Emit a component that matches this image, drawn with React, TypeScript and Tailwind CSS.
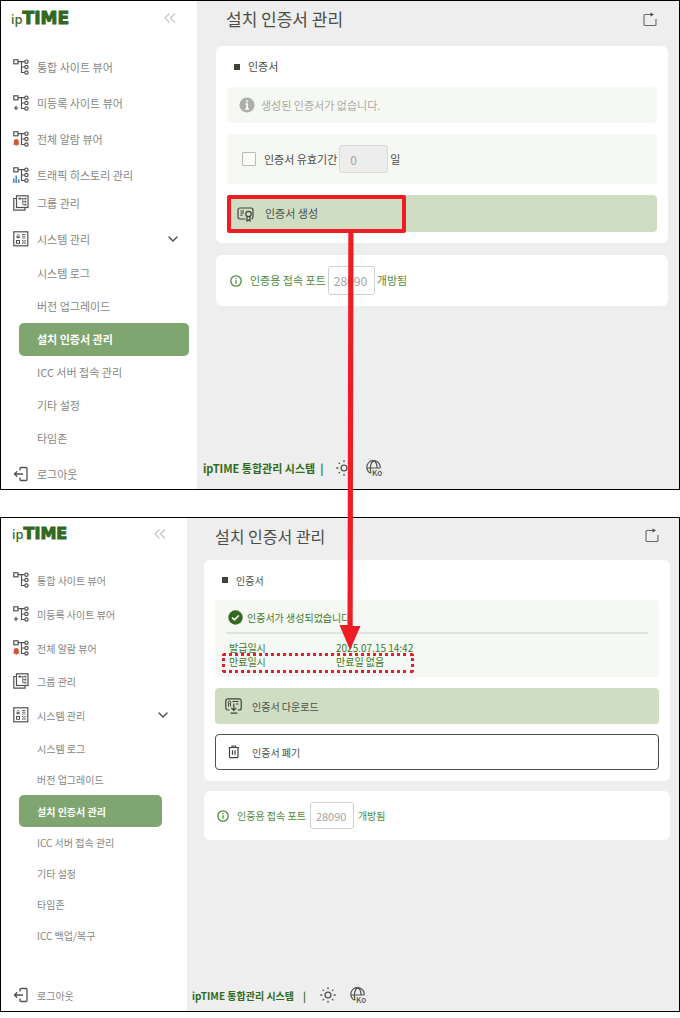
import type { ReactNode } from "react"
import { ChevronDown } from "lucide-react"
import clsx from "clsx"

interface MenuItem {
  label: string
  icon: ReactNode
}

interface ScreenProps {
  compact?: boolean
  items: MenuItem[]
  subItems: string[]
  children: ReactNode
}

const ACTIVE_ITEM = "설치 인증서 관리"

const firstItems: MenuItem[] = [
  { label: "통합 사이트 뷰어", icon: <TreeIcon /> },
  { label: "미등록 사이트 뷰어", icon: <TreeIcon badge="plus" /> },
  { label: "전체 알람 뷰어", icon: <TreeIcon badge="bell" /> },
  { label: "트래픽 히스토리 관리", icon: <TreeIcon badge="bars" /> },
]

const secondItems = firstItems.slice(0, 3)

const subItems = ["시스템 로그", "버전 업그레이드", ACTIVE_ITEM, "ICC 서버 접속 관리", "기타 설정", "타임존"]

export default function App() {
  return (
    <div className="relative bg-white font-['Noto_Sans_CJK_KR',sans-serif] text-[#4a4d48]">
      <Screen items={firstItems} subItems={subItems}>
        <section className="rounded-md bg-white px-[11px] pb-[11px]">
          <CardTitle />
          <div className="flex h-9 items-center gap-[6px] rounded bg-[#f6f8f3] pl-3 text-[#a8aaa6]">
            <InfoFilledIcon />
            <span>생성된 인증서가 없습니다.</span>
          </div>
          <div className="mt-[11px] flex h-[50px] items-center rounded bg-[#f6f8f3] pl-[15px]">
            <input
              id="use-period"
              type="checkbox"
              className="size-[14px] appearance-none rounded-[1px] border border-[#b9bbb7] bg-[#fbfcfa]"
            />
            <label htmlFor="use-period" className="ml-2">
              인증서 유효기간
            </label>
            <input
              type="text"
              aria-label="유효기간 (일)"
              defaultValue="0"
              disabled
              className="mx-[2px] h-7 w-[49px] rounded-[3px] border border-[#d9dbd8] bg-[#ededed] pl-[10px] text-xs text-[#a3a5a2]"
            />
            <span>일</span>
          </div>
          <button
            type="button"
            className="relative mt-[11px] flex h-[37px] w-full items-center gap-[11px] rounded bg-[#cfdec3] pl-[10px]"
          >
            <CertificateIcon />
            <span>인증서 생성</span>
            <span className="absolute top-0 left-0 h-[38px] w-[179px] rounded-[2px] border-4 border-[#ee1c25]" />
          </button>
        </section>
        <PortCard id="port-before" />
      </Screen>

      <div className="h-[27px]" />

      <Screen compact items={secondItems} subItems={[...subItems, "ICC 백업/복구"]}>
        <section className="rounded-md bg-white px-[11px] pb-[11px]">
          <CardTitle compact />
          <div className="relative h-[77px] rounded bg-[#f6f8f3] px-[11px] text-[#3c7a28]">
            <div className="flex h-[34px] items-center gap-1 border-b-2 border-[#e0e3dc] pt-[2px] pl-[2px]">
              <CheckFilledIcon />
              <span>인증서가 생성되었습니다.</span>
            </div>
            <dl className="grid grid-cols-[107px_1fr] pt-[7px] pl-[3px] leading-[14px]">
              <dt>발급일시</dt>
              <dd>2025.07.15 14:42</dd>
              <dt>만료일시</dt>
              <dd>만료일 없음</dd>
            </dl>
            <span className="absolute top-[53px] left-[7px] h-[20px] w-[192px] rounded-[3px] border-3 border-dotted border-[#e0202c]" />
          </div>
          <button
            type="button"
            className="mt-[11px] flex h-9 w-full items-center gap-[10px] rounded bg-[#cfdec3] pl-[10px]"
          >
            <DownloadIcon />
            <span>인증서 다운로드</span>
          </button>
          <button
            type="button"
            className="mt-[10px] flex h-9 w-full items-center gap-[10px] rounded border border-[#4a4d48] bg-white pl-[10px]"
          >
            <TrashIcon />
            <span>인증서 폐기</span>
          </button>
        </section>
        <PortCard id="port-after" compact />
      </Screen>

      <svg
        className="pointer-events-none absolute top-[232px] left-[339px]"
        width="22"
        height="418"
        viewBox="0 0 22 418"
        fill="#ee1c25"
      >
        <path d="M9.3 0h5.2L13.7 394h7.8L11 418 .5 393h8z" />
      </svg>
    </div>
  )
}

function Screen({ compact, items, subItems, children }: ScreenProps) {
  return (
    <div className={clsx("flex border border-black bg-[#eeeeee]", compact ? "text-[10px]" : "text-[11px]")}>
      <aside className={clsx("shrink-0 bg-white text-[#858784]", compact ? "w-[186px] pb-[2px]" : "w-[196px] pb-px")}>
        <div
          className={clsx(
            "flex items-center justify-between pr-[21px]",
            compact ? "mb-[13px] h-8 pl-[11px]" : "mb-[14px] h-[34px] pl-[10px]",
          )}
        >
          <Logo compact={compact} />
          <button type="button" aria-label="메뉴 접기">
            <svg width="12" height="10" viewBox="0 0 12 10" fill="none" stroke="#c6c8c5" strokeWidth="1.3">
              <path d="M5.5.5 1 5l4.500 4.500M11 .5 6.500 5 11 9.500" />
            </svg>
          </button>
        </div>

        <nav>
          {items.map((item) => (
            <MenuLink key={item.label} {...item} className={compact ? "h-[34px]" : "h-9"} />
          ))}
          <MenuLink label="그룹 관리" icon={<GroupIcon />} className={compact ? "h-8" : "h-5"} />
          <MenuLink label="시스템 관리" icon={<SystemIcon />} className={compact ? "h-9" : "mt-2 h-9"}>
            <ChevronDown className="mr-4 ml-auto size-4 text-[#4a4d48]" strokeWidth={2} />
          </MenuLink>
          {subItems.map((label) => (
            <a
              key={label}
              href="#"
              className={clsx(
                "ml-[18px] flex items-center pl-[18px]",
                compact ? "mr-[25px]" : "mr-2",
                label === ACTIVE_ITEM ? "rounded-[5px] bg-[#7fa571] font-bold text-white" : "",
                !compact ? "h-[33px]" : label === ACTIVE_ITEM ? "h-8" : "h-[31px]",
              )}
            >
              {label}
            </a>
          ))}
        </nav>

        <MenuLink label="로그아웃" icon={<LogoutIcon />} className={compact ? "mt-[30px] h-7" : "mt-[5px] h-7"} />
      </aside>

      <main className="flex min-w-0 grow flex-col">
        <div className={compact ? "pr-[9px] pl-[17px]" : "pr-[11px] pl-[19px]"}>
          <header
            className={clsx(
              "flex items-center justify-between pr-[11px]",
              compact ? "mb-[7px] h-[35px] pl-[11px]" : "mb-[9px] h-9 pl-[10px]",
            )}
          >
            <h1 className={compact ? "text-base" : "text-[17px]"}>설치 인증서 관리</h1>
            <button type="button" aria-label="새 창으로 열기">
              <svg width="14" height="15" viewBox="0 0 14 15" fill="none" stroke="#666a63" strokeWidth="1.1">
                <path d="M8.500 2.500H2A1 1 0 0 0 1 3.500V12.500a1 1 0 0 0 1 1h10a1 1 0 0 0 1-1V7" />
                <path d="M7.500.5 11 2.500 7.500 4.500z" fill="#4a4d48" stroke="none" />
              </svg>
            </button>
          </header>
          {children}
        </div>

        <footer
          className={clsx(
            "mt-auto flex items-center font-bold text-[#2f6b20]",
            compact ? "h-8 pl-[5px]" : "h-[42px] pl-[6px]",
          )}
        >
          <span>ipTIME 통합관리 시스템</span>
          <span className={compact ? "mx-[9px]" : "mx-[5px]"}>|</span>
          <button type="button" aria-label="테마" className={clsx("mr-[14px]", compact ? "ml-[5px]" : "ml-2")}>
            <SunIcon />
          </button>
          <button type="button" aria-label="언어">
            <GlobeIcon />
          </button>
        </footer>
      </main>
    </div>
  )
}

function MenuLink({
  label,
  icon,
  className,
  children,
}: MenuItem & { className: string; children?: ReactNode }) {
  return (
    <a href="#" className={clsx("flex items-center gap-2 pl-3", className)}>
      {icon}
      <span>{label}</span>
      {children}
    </a>
  )
}

function CardTitle({ compact }: { compact?: boolean }) {
  return (
    <h2 className={clsx("flex items-center gap-2 pl-[7px]", compact ? "h-10" : "h-[41px]")}>
      <span className="size-[6px] bg-[#3f433c]" />
      인증서
    </h2>
  )
}

function PortCard({ id, compact }: { id: string; compact?: boolean }) {
  return (
    <section
      className={clsx(
        "flex items-center rounded-md bg-white text-[#4d8a3a]",
        compact ? "mt-[10px] h-[49px] pl-[13px]" : "mt-3 h-[51px] pl-[14px]",
      )}
    >
      <svg width="12" height="12" viewBox="0 0 12 12" fill="none" stroke="currentColor" strokeWidth="1.3">
        <circle cx="6" cy="6" r="5.200" />
        <path d="M6 5.300v3.500M6 3v1.300" />
      </svg>
      <label htmlFor={id} className="ml-2">
        인증용 접속 포트
      </label>
      <input
        id={id}
        type="text"
        defaultValue="28090"
        className={clsx(
          "rounded-[3px] border border-[#cfd1ce] bg-white pl-[5px] text-[#a3a5a2]",
          compact ? "mx-1 h-[27px] w-11 text-[11px]" : "mx-[2px] h-[29px] w-[47px] text-xs",
        )}
      />
      <span>개방됨</span>
    </section>
  )
}

function Logo({ compact }: { compact?: boolean }) {
  return (
    <a href="#" className="flex items-baseline leading-none text-[#32691f]">
      <span className="font-['Noto_Sans',sans-serif] text-[13px] font-medium">ip</span>
      <span
        className={clsx(
          "font-['DejaVu_Sans',sans-serif] font-bold [-webkit-text-stroke:1px_#32691f]",
          compact ? "text-base" : "text-[17px]",
        )}
      >
        TIME
      </span>
    </a>
  )
}

function TreeIcon({ badge }: { badge?: "plus" | "bell" | "bars" }) {
  return (
    <svg width="16" height="16" viewBox="0 0 16 16" fill="none" stroke="#50534e" strokeWidth="1.2">
      <rect x=".8" y=".8" width="4.200" height="4" />
      <path d="M5 2.700h6.700M8.500 2.700v10.800h3.200M8.500 8h3.200" />
      <circle cx="13.400" cy="2.700" r="1.700" />
      <circle cx="13.400" cy="8" r="1.700" />
      <circle cx="13.400" cy="13.500" r="1.700" />
      {badge === "plus" && <path d="M3 10.800v4.400M.8 13h4.400" />}
      {badge === "bell" && (
        <path
          d="M3.300 8a2.500 2.500 0 0 0-2.500 2.500v2l-.8 1.300h2.300a1 1 0 0 0 2 0h2.300l-.8-1.300v-2A2.500 2.500 0 0 0 3.300 8z"
          fill="#d1553d"
          stroke="none"
        />
      )}
      {badge === "bars" && <path d="M.8 11.500V16M3.200 8.500V16M5.800 12.500V16" stroke="#4583cf" strokeWidth="1.500" />}
    </svg>
  )
}

function GroupIcon() {
  return (
    <svg width="16" height="16" viewBox="0 0 16 16" fill="none" stroke="#50534e" strokeWidth="1.2">
      <path d="M3.500 3.500H.8v11.700h11.200v-2.600" />
      <rect x="3.500" y=".8" width="11.500" height="11.700" />
      <path d="M5.500 3.700h2.500M11.500 3.700h1.800M11.500 6.700h1.800M11.500 9.700h1.800" strokeWidth="1.8" />
      <path d="M8 3.700h3.500M9.800 3.700v6h1.700M9.800 6.700h1.700" strokeWidth=".8" />
    </svg>
  )
}

function SystemIcon() {
  return (
    <svg width="16" height="16" viewBox="0 0 16 16" fill="none" stroke="#50534e">
      <rect x=".8" y=".8" width="14" height="14" strokeWidth="1.2" />
      <path d="M3.500 5.700h3.200M4 4.500q1-2.400 2.200 0M3.500 6.700h3.200" />
      <path d="M9 3.500h3.500M9 5.200h3.500M9 7h3.500" strokeWidth=".8" />
      <rect x="3.500" y="9.500" width="3" height="2.800" />
      <path d="M9 9.500h1.300M11.500 9.500h1.300M9 12.200h1.300M11.500 12.200h1.300M10.300 10.800h1.300" strokeWidth="1.2" />
    </svg>
  )
}

function LogoutIcon() {
  return (
    <svg width="16" height="16" viewBox="0 0 16 16" fill="none" stroke="#50534e" strokeWidth="1.3">
      <path d="M7 4.500v-2a1 1 0 0 1 1-1h5a1 1 0 0 1 1 1v11a1 1 0 0 1-1 1H8a1 1 0 0 1-1-1v-2" />
      <path d="M10 8H1.500M4.200 5.300 1.500 8l2.700 2.700" />
    </svg>
  )
}

function InfoFilledIcon() {
  return (
    <svg width="16" height="16" viewBox="0 0 16 16">
      <circle cx="8" cy="8" r="7.600" fill="#adafab" />
      <path d="M8 3.200v2M6.500 7h1.700v5M6.200 12h3.800" fill="none" stroke="#fff" strokeWidth="1.6" />
    </svg>
  )
}

function CheckFilledIcon() {
  return (
    <svg width="15" height="15" viewBox="0 0 15 15">
      <circle cx="7.500" cy="7.500" r="7.200" fill="#32691f" />
      <path d="m4.200 7.600 2.300 2.200 4.300-4.300" fill="none" stroke="#fff" strokeWidth="1.7" />
    </svg>
  )
}

function CertificateIcon() {
  return (
    <svg width="17" height="16" viewBox="0 0 17 16" fill="none" stroke="#3f433c" strokeWidth="1.2">
      <path d="M8.500 13H3a2 2 0 0 1-2-2V4a2 2 0 0 1 2-2h11a2 2 0 0 1 2 2v7a2 2 0 0 1-1.500 1.900" />
      <path d="M3.500 5h3.500M3.500 7h3.500M3.500 9.200h2" />
      <circle cx="11.500" cy="8" r="2.700" />
      <path d="M10 10.500v4.500l1.500-1 1.500 1v-4.500" />
    </svg>
  )
}

function DownloadIcon() {
  return (
    <svg width="17" height="16" viewBox="0 0 17 16" fill="none" stroke="#3f433c" strokeWidth="1.2">
      <path d="M4.500 12H2.800A2 2 0 0 1 .8 10V2.800a2 2 0 0 1 2-2h11.400a2 2 0 0 1 2 2V10a2 2 0 0 1-2 2h-1.400" />
      <circle cx="4.500" cy="4.300" r="1.300" strokeWidth="1" />
      <path d="M3.500 5.500v3M5.500 5.500v3" strokeWidth="1" />
      <path d="M7.500 3.500h6M11 6h2.500M8.800 5.500v6.700M6.300 9.800l2.500 2.600 2.500-2.600M5.500 15.200h6.800" />
    </svg>
  )
}

function TrashIcon() {
  return (
    <svg width="16" height="14" viewBox="0 0 16 14" fill="none" stroke="#3f433c" strokeWidth="1.2">
      <path d="M2.500 2.500h10.500M6 2.200V1h3.500v1.200M3.500 2.500v9.200a1 1 0 0 0 1 1h6.500a1 1 0 0 0 1-1V2.500M6.500 5.200v4.600M9 5.200v4.600" />
    </svg>
  )
}

function SunIcon() {
  return (
    <svg width="16" height="16" viewBox="0 0 16 16" fill="none" stroke="#50534e" strokeWidth="1.3">
      <circle cx="8" cy="8" r="2.900" />
      <path d="M8 .3v2M8 13.700v2M.3 8h2M13.700 8h2M2.600 2.600l1.300 1.300M12.100 12.100l1.300 1.300M2.600 13.400l1.300-1.300M12.100 3.900l1.300-1.300" />
    </svg>
  )
}

function GlobeIcon() {
  return (
    <svg width="17" height="16" viewBox="0 0 17 16" fill="none" stroke="#50534e" strokeWidth="1.2">
      <path d="M4.500 13.200A6.700 6.700 0 1 1 14.200 8M.9 8h13.300M5 13C3.500 7.500 5 1.700 7.600.9c2.400.8 3.500 3.500 3.400 7" />
      <text x="6" y="15.500" fontSize="8" fontWeight="500" fill="#50534e" stroke="none">
        Ko
      </text>
    </svg>
  )
}
